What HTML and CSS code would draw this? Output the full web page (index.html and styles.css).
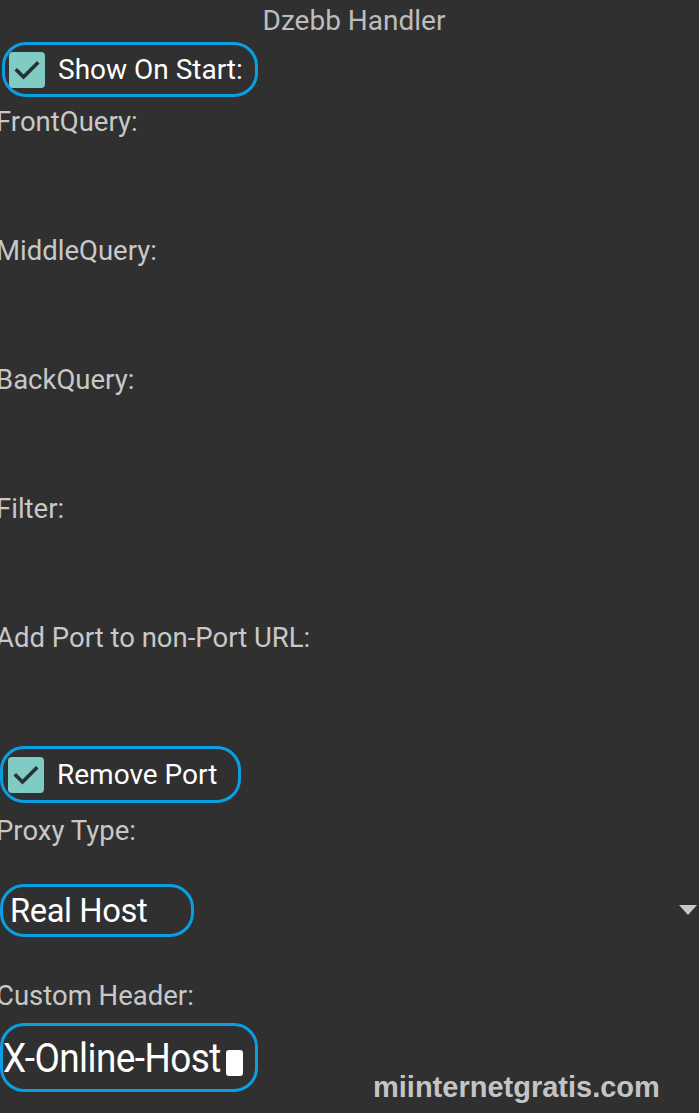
FILE: index.html
```html
<!DOCTYPE html>
<html lang="en">
<head>
    <meta charset="UTF-8" />
    <title>Dzebb Handler</title>
    <link rel="stylesheet" href="styles.css">
</head>
<body>
    <div class="screen">
        <div class="title">Dzebb Handler</div>

        <div class="check-row mark mark-start">
            <span class="box">
                <svg width="36" height="36" viewBox="0 0 36 36"><path d="M8 18.5 L14.5 25 L28 11.5" fill="none" stroke="#263238" stroke-width="3.6" stroke-linecap="square"/></svg>
            </span>
            <span class="check-text">Show On Start:</span>
        </div>

        <div class="field"><div class="label">FrontQuery:</div></div>
        <div class="field"><div class="label">MiddleQuery:</div></div>
        <div class="field"><div class="label">BackQuery:</div></div>
        <div class="field"><div class="label">Filter:</div></div>
        <div class="field field-last"><div class="label">Add Port to non-Port URL:</div></div>

        <div class="check-row mark mark-port">
            <span class="box">
                <svg width="36" height="36" viewBox="0 0 36 36"><path d="M8 18.5 L14.5 25 L28 11.5" fill="none" stroke="#263238" stroke-width="3.6" stroke-linecap="square"/></svg>
            </span>
            <span class="check-text">Remove Port</span>
        </div>

        <div class="label">Proxy Type:</div>
        <div class="spinner">
            <div class="mark mark-host"><span class="value">Real Host</span></div>
            <span class="arrow"></span>
        </div>

        <div class="label">Custom Header:</div>
        <div class="header-row">
            <div class="mark mark-header"><span class="value value-big">X-Online-Host</span><span class="cursor"></span></div>
            <div class="watermark">miinternetgratis.com</div>
        </div>
    </div>
</body>
</html>
```

FILE: styles.css
```css
html, body {
    margin: 0;
    padding: 0;
    background-color: #303030;
    height: 1113px;
    overflow: hidden;
}
.screen {
    width: 699px;
    font-family: 'Roboto', 'Liberation Sans', sans-serif;
    color: #c8c8c8;
}
.title {
    text-align: center;
    font-size: 28px;
    line-height: 32px;
    padding-top: 5px;
    padding-left: 9px;
    color: #bdbdbd;
}
.mark {
    border: 3px solid #0a9fe3;
    border-radius: 24px;
    box-sizing: border-box;
}
.check-row {
    display: flex;
    align-items: center;
    gap: 13px;
}
.mark-start {
    width: 256px;
    height: 55px;
    margin: 5px 0 0 2px;
    padding-left: 4px;
}
.mark-port {
    width: 241px;
    height: 57px;
    margin-left: 0;
    padding-left: 5px;
}
.box {
    width: 36px;
    height: 36px;
    background-color: #80cbc4;
    border-radius: 4px;
    display: block;
}
.box svg {
    display: block;
}
.check-text {
    font-size: 28px;
    color: #ffffff;
}
.label {
    font-size: 27.5px;
    line-height: 32px;
    margin-left: -4px;
    color: #c8c8c8;
}
.field {
    height: 129px;
    box-sizing: border-box;
    padding-top: 9px;
}
.field-last {
    height: 133px;
}
.mark-port + .label {
    margin-top: 12px;
}
.spinner {
    display: flex;
    align-items: center;
    justify-content: space-between;
    margin-top: 36px;
    height: 54px;
}
.mark-host {
    width: 194px;
    height: 53px;
    display: flex;
    align-items: center;
    padding-left: 7px;
}
.value {
    font-size: 33px;
    color: #ffffff;
    letter-spacing: -0.4px;
    transform: scaleX(0.99);
    transform-origin: left center;
    display: inline-block;
}
.arrow {
    width: 0;
    height: 0;
    border-left: 9px solid transparent;
    border-right: 9px solid transparent;
    border-top: 10px solid #c8c8c8;
    margin-right: 2px;
}
.spinner + .label {
    margin-top: 43px;
}
.header-row {
    display: flex;
    align-items: flex-start;
    margin-top: 11px;
}
.mark-header {
    width: 258px;
    height: 69px;
    display: flex;
    align-items: center;
    padding-left: 0;
    position: relative;
}
.value-big {
    font-size: 41px;
    letter-spacing: -0.6px;
    transform: scaleX(0.9);
}
.cursor {
    position: absolute;
    left: 223px;
    top: 24px;
    width: 17px;
    height: 26px;
    background-color: #ffffff;
    border-radius: 3px;
}
.watermark {
    font-family: 'Liberation Sans', Arial, sans-serif;
    font-weight: bold;
    font-size: 29px;
    color: #c4c4c4;
    margin: 48px 0 0 115px;
    letter-spacing: 0;
}
```
